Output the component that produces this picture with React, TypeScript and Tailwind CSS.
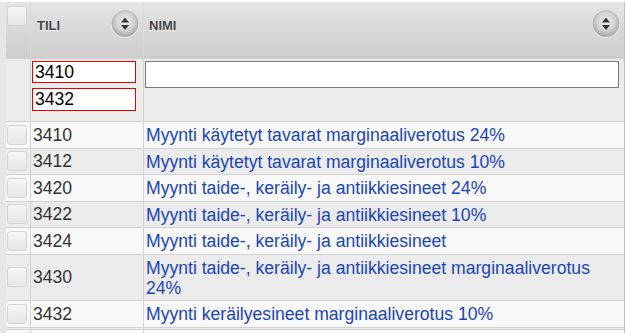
import React from "react";

const rows = [
  { num: "3410", name: "Myynti käytetyt tavarat marginaaliverotus 24%" },
  { num: "3412", name: "Myynti käytetyt tavarat marginaaliverotus 10%" },
  { num: "3420", name: "Myynti taide-, keräily- ja antiikkiesineet 24%" },
  { num: "3422", name: "Myynti taide-, keräily- ja antiikkiesineet 10%" },
  { num: "3424", name: "Myynti taide-, keräily- ja antiikkiesineet" },
  { num: "3430", name: "Myynti taide-, keräily- ja antiikkiesineet marginaaliverotus 24%" },
  { num: "3432", name: "Myynti keräilyesineet marginaaliverotus 10%" },
];

function SortButton() {
  return (
    <svg width="28" height="28" viewBox="0 0 28 28" className="shrink-0">
      <defs>
        <radialGradient id="sb" cx="0.5" cy="0.42" r="0.58">
          <stop offset="0" stopColor="#efefef" />
          <stop offset="0.6" stopColor="#d2d2d2" />
          <stop offset="1" stopColor="#a2a2a2" />
        </radialGradient>
      </defs>
      <circle cx="14" cy="14" r="13.9" fill="#f2f2f2" />
      <circle cx="14" cy="13.6" r="13.2" fill="url(#sb)" stroke="#b4b4b4" strokeWidth="0.7" />
      <path d="M10 12.5 L14 7.5 L18 12.5 Z" fill="#363636" />
      <path d="M10 15 L14 20 L18 15 Z" fill="#363636" />
    </svg>
  );
}

function Check() {
  return (
    <div className="w-[20px] h-[20px] rounded-[3px] border border-[#d3d3d3] bg-gradient-to-b from-[#f6f6f6] to-[#e6e6e6] shadow-[inset_0_0_1px_rgba(255,255,255,0.9)]" />
  );
}

export default function App() {
  return (
    <div className="w-[626px] h-[333px] overflow-hidden bg-white pt-[2px] font-['Liberation_Sans',Arial,sans-serif]">
      <div className="flex h-full">
        {/* left strip */}
        <div className="w-[6px] bg-[#e6e6e6] shrink-0" />

        <div className="w-[619px] shrink-0 border-r border-[#c2c2c2]">
          {/* header */}
          <div className="flex h-[56px] bg-gradient-to-b from-[#e5e5e5] to-[#cdcdcd]">
            <div className="w-[25px] border-r border-[#d9d9d9] pl-[1px] pt-[4px]">
              <Check />
            </div>
            <div className="w-[113px] border-r border-[#d9d9d9] flex items-start justify-between pl-[6px] pr-[4px] pt-[8px]">
              <span className="text-[13px] font-bold text-[#454545] [text-shadow:0_1px_1px_#ffffff] pt-[6px]">TILI</span>
              <SortButton />
            </div>
            <div className="flex-1 flex items-start justify-between pl-[5px] pr-[4px] pt-[8px]">
              <span className="text-[13px] font-bold text-[#454545] [text-shadow:0_1px_1px_#ffffff] pt-[6px]">NIMI</span>
              <SortButton />
            </div>
          </div>

          {/* filter row */}
          <div className="flex h-[63px] bg-[#ebebeb] border-t border-[#d2d2d2]">
            <div className="w-[25px] border-r border-[#d4d4d4]" />
            <div className="w-[113px] border-r border-[#d4d4d4] pl-[1px] pt-[2px] flex flex-col gap-[5px]">
              <input
                readOnly
                value="3410"
                className="w-[104px] h-[22px] border border-[#e60000] bg-white pl-[2px] text-[17.6px] text-black outline-none"
              />
              <input
                readOnly
                value="3432"
                className="w-[104px] h-[23px] border border-[#e60000] bg-white pl-[2px] text-[17.6px] text-black outline-none"
              />
            </div>
            <div className="flex-1 pl-[1px] pt-[2px]">
              <input
                readOnly
                value=""
                className="w-[474px] h-[27px] border border-[#7a7a7a] bg-white text-[17.6px] outline-none"
              />
            </div>
          </div>

          {/* data rows */}
          <div className="border-t border-[#d2d2d2]">
            {rows.map((r, i) => (
              <div
                key={r.num}
                className={`flex border-b border-[#d2d2d2] ${i % 2 === 0 ? "bg-[#f8f8f8]" : "bg-[#ebebeb]"}`}
              >
                <div className="w-[25px] border-r border-[#d4d4d4] pl-[1px] flex items-center">
                  <Check />
                </div>
                <div className="w-[113px] border-r border-[#d4d4d4] pl-[2px] flex items-center text-[17.6px] leading-[20px] text-[#333333]">
                  {r.num}
                </div>
                <div className="flex-1 pl-[2px] pr-[4px] pt-[3px] pb-[2.5px] text-[17.6px] leading-[20px] text-[#1a46b6]">
                  {r.name}
                </div>
              </div>
            ))}
            <div className="flex h-[2px] bg-[#f0f0f0] border-b border-[#d2d2d2]">
              <div className="w-[25px] border-r border-[#d4d4d4]" />
              <div className="w-[113px] border-r border-[#d4d4d4]" />
            </div>
            <div className="flex h-[20px] bg-[#f8f8f8]">
              <div className="w-[25px] border-r border-[#d4d4d4]" />
              <div className="w-[113px] border-r border-[#d4d4d4]" />
            </div>
          </div>
        </div>
      </div>
    </div>
  );
}
